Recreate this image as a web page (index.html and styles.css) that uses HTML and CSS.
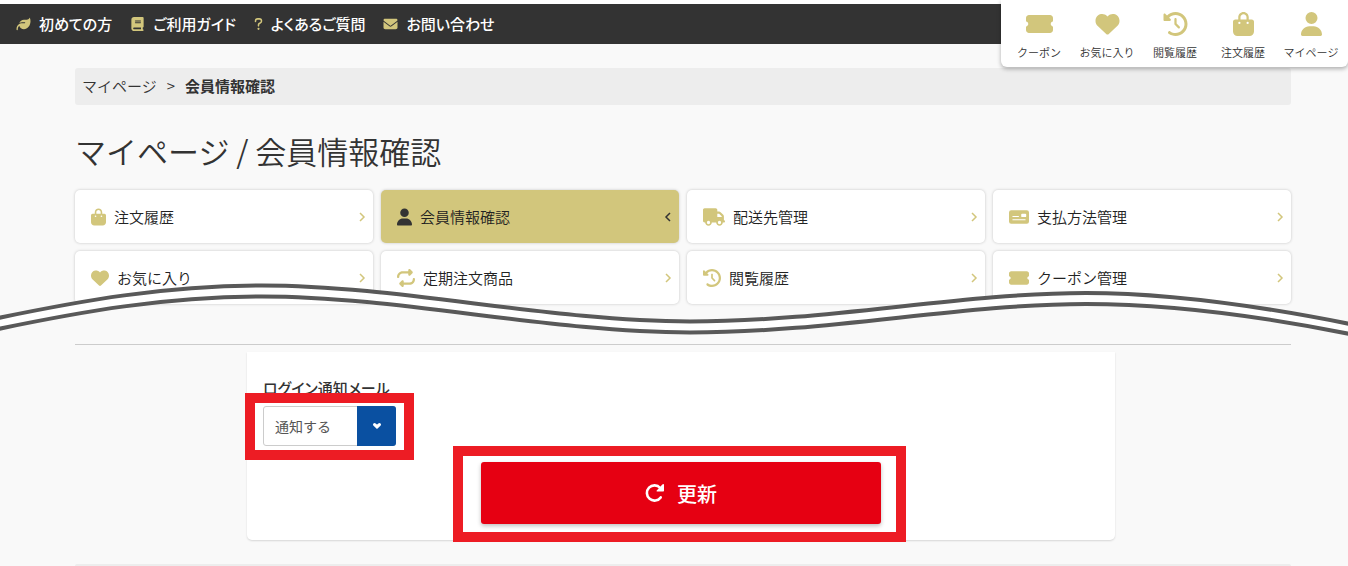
FILE: index.html
```html
<!DOCTYPE html>
<html lang="ja">
<head>
  <meta charset="UTF-8">
  <meta name="viewport" content="width=device-width, initial-scale=1.0">
  <title>マイページ / 会員情報確認</title>
  <link rel="stylesheet" href="styles.css">
</head>
<body>
  <!-- Icon set -->
  <svg class="icon-defs" aria-hidden="true">
    <symbol id="leaf" viewBox="0 0 512 512"><path d="M272 96c-78.6 0-145.1 51.5-167.7 122.5c33.6-17 71.5-26.5 111.7-26.5h88c8.8 0 16 7.2 16 16s-7.2 16-16 16H288 216c-16.6 0-32.7 1.9-48.3 5.4c-25.9 5.9-49.9 16.4-71.4 30.7C38.3 298.8 0 364.9 0 440v16c0 13.3 10.7 24 24 24s24-10.7 24-24V440c0-48.7 20.7-92.5 53.8-123.2C121.6 392.3 190.3 448 272 448l1 0c132.1-.7 239-130.9 239-291.4c0-42.6-7.5-83.1-21.1-119.6c-2.6-6.9-12.7-6.6-16.2-.1C455.9 72.1 418.7 96 376 96L272 96z"/></symbol>
    <symbol id="book" viewBox="0 0 448 512"><path d="M96 0C43 0 0 43 0 96V416c0 53 43 96 96 96H384h32c17.7 0 32-14.3 32-32s-14.3-32-32-32V384c17.7 0 32-14.3 32-32V32c0-17.7-14.3-32-32-32H384 96zm0 384H352v64H96c-17.7 0-32-14.3-32-32s14.3-32 32-32zm32-240c0-8.8 7.2-16 16-16H336c8.8 0 16 7.2 16 16s-7.2 16-16 16H144c-8.8 0-16-7.2-16-16zm16 48H336c8.8 0 16 7.2 16 16s-7.2 16-16 16H144c-8.8 0-16-7.2-16-16s7.2-16 16-16z"/></symbol>
    <symbol id="question" viewBox="0 0 320 512"><path d="M50 165v-15c0-46 34-82 80-82h60c46 0 80 36 80 80 0 30-16 54-42 68l-38 22c-18 10-30 26-30 46v40" fill="none" stroke="currentColor" stroke-width="56" stroke-linecap="round"/><circle cx="160" cy="432" r="40"/></symbol>
    <symbol id="envelope" viewBox="0 0 512 512"><path d="M48 64C21.5 64 0 85.5 0 112c0 15.1 7.1 29.3 19.2 38.4L236.8 313.6c11.4 8.5 27 8.5 38.4 0L492.8 150.4c12.1-9.1 19.2-23.3 19.2-38.4c0-26.5-21.5-48-48-48H48zM0 176V384c0 35.3 28.7 64 64 64H448c35.3 0 64-28.7 64-64V176L294.4 339.2c-22.8 17.1-54 17.1-76.8 0L0 176z"/></symbol>
    <symbol id="ticket" viewBox="0 0 576 512"><path d="M0 128C0 92.7 28.7 64 64 64H512c35.3 0 64 28.7 64 64v64c0 8.8-7.4 15.7-15.7 18.6C541.5 217.1 528 235 528 256s13.5 38.9 32.3 45.4c8.3 2.9 15.7 9.8 15.7 18.6v64c0 35.3-28.7 64-64 64H64c-35.3 0-64-28.7-64-64V320c0-8.8 7.4-15.7 15.7-18.6C34.5 294.9 48 277 48 256s-13.5-38.9-32.3-45.4C7.4 207.7 0 200.8 0 192V128z"/></symbol>
    <symbol id="heart" viewBox="0 0 512 512"><path d="M47.6 300.4L228.3 469.1c7.5 7 17.4 10.9 27.7 10.9s20.2-3.9 27.7-10.9L464.4 300.4c30.4-28.3 47.6-68 47.6-109.5v-5.8c0-69.9-50.5-129.5-119.4-141C347 36.5 300.6 51.4 268 84L256 96 244 84c-32.6-32.6-79-47.5-124.6-39.9C50.5 55.6 0 115.2 0 185.1v5.8c0 41.5 17.2 81.2 47.6 109.5z"/></symbol>
    <symbol id="history" viewBox="0 0 512 512"><path d="M75 75L41 41C25.9 25.9 0 36.6 0 57.9V168c0 13.3 10.7 24 24 24H134.1c21.4 0 32.1-25.9 17-41l-30.8-30.8C155 85.5 203 64 256 64c106 0 192 86 192 192s-86 192-192 192c-40.8 0-78.6-12.7-109.7-34.4c-14.5-10.1-34.4-6.6-44.6 7.9s-6.6 34.4 7.9 44.6C151.2 495 201.7 512 256 512c141.4 0 256-114.6 256-256S397.4 0 256 0C185.3 0 121.3 28.7 75 75zm181 53c-13.3 0-24 10.7-24 24V256c0 6.4 2.5 12.5 7 17l72 72c9.4 9.4 24.6 9.4 33.9 0s9.4-24.6 0-33.9l-65-65V152c0-13.3-10.7-24-24-24z"/></symbol>
    <symbol id="bag" viewBox="0 0 448 512"><path d="M160 112c0-35.3 28.7-64 64-64s64 28.7 64 64v48H160V112zm-48 48H48c-26.5 0-48 21.5-48 48V416c0 53 43 96 96 96H352c53 0 96-43 96-96V208c0-26.5-21.5-48-48-48H336V112C336 50.1 285.9 0 224 0S112 50.1 112 112v48zm24 48a24 24 0 1 1 0 48 24 24 0 1 1 0-48zm152 24a24 24 0 1 1 48 0 24 24 0 1 1-48 0z"/></symbol>
    <symbol id="user" viewBox="0 0 448 512"><path d="M224 256A128 128 0 1 0 224 0a128 128 0 1 0 0 256zm-45.7 48C79.8 304 0 383.8 0 482.3C0 498.7 13.3 512 29.7 512H418.3c16.4 0 29.7-13.3 29.7-29.7C448 383.8 368.2 304 269.7 304H178.3z"/></symbol>
    <symbol id="truck" viewBox="0 0 640 512"><path d="M48 0C21.5 0 0 21.5 0 48V368c0 26.5 21.5 48 48 48H64c0 53 43 96 96 96s96-43 96-96H384c0 53 43 96 96 96s96-43 96-96h32c17.7 0 32-14.3 32-32s-14.3-32-32-32V288 256 237.3c0-17-6.7-33.3-18.7-45.3L512 114.7c-12-12-28.3-18.7-45.3-18.7H416V48c0-26.5-21.5-48-48-48H48zM416 160h50.7L544 237.3V256H416V160zM112 416a48 48 0 1 1 96 0 48 48 0 1 1-96 0zm368-48a48 48 0 1 1 0 96 48 48 0 1 1 0-96z"/></symbol>
    <symbol id="check" viewBox="0 0 576 512"><path fill-rule="evenodd" d="M64 64H512a64 64 0 0 1 64 64V384a64 64 0 0 1-64 64H64a64 64 0 0 1-64-64V128a64 64 0 0 1 64-64zM112 224a16 16 0 0 0 0 32H272a16 16 0 0 0 0-32zM112 320a16 16 0 0 0 0 32H464a16 16 0 0 0 0-32zM376 160a24 24 0 0 0-24 24V232a24 24 0 0 0 24 24H472a24 24 0 0 0 24-24V184a24 24 0 0 0-24-24z"/></symbol>
    <symbol id="repeat" viewBox="0 0 512 512"><path d="M0 224c0 17.7 14.3 32 32 32s32-14.3 32-32c0-53 43-96 96-96H320v32c0 12.9 7.8 24.6 19.8 29.6s25.7 2.2 34.9-6.9l64-64c12.5-12.5 12.5-32.8 0-45.3l-64-64c-9.2-9.2-22.9-11.9-34.9-6.9S320 19.1 320 32V64H160C71.6 64 0 135.6 0 224zm512 64c0-17.7-14.3-32-32-32s-32 14.3-32 32c0 53-43 96-96 96H192V352c0-12.9-7.8-24.6-19.8-29.6s-25.7-2.2-34.9 6.9l-64 64c-12.5 12.5-12.5 32.8 0 45.3l64 64c9.2 9.2 22.9 11.9 34.9 6.9s19.8-16.6 19.8-29.6V448H352c88.4 0 160-71.6 160-160z"/></symbol>
    <symbol id="arrow" viewBox="0 0 8 12"><path d="M2 2l4 4-4 4" fill="none" stroke="currentColor" stroke-width="1.5"/></symbol>
    <symbol id="reload" viewBox="0 0 20 20"><path d="M15.7 14.4A7.6 7.6 0 1 1 15.2 5" fill="none" stroke="currentColor" stroke-width="2.6" stroke-linecap="round"/><path d="M19 1.6v6.2q0 .8-.8.8h-6q-1.200-.2-.5-1.200l5.900-6.100q1.200-.9 1.400.3z"/></symbol>
    <symbol id="caret" viewBox="0 0 10 8"><path d="M2.600 2.600L5 4.800l2.400-2.200" fill="none" stroke="currentColor" stroke-width="3.200" stroke-linecap="round"/></symbol>
  </svg>

  <header class="header">
    <nav class="guide-nav">
      <a href="#"><svg class="guide-icon"><use href="#leaf"/></svg>初めての方</a>
      <a href="#"><svg class="guide-icon"><use href="#book"/></svg>ご利用ガイド</a>
      <a href="#"><svg class="guide-icon narrow"><use href="#question"/></svg>よくあるご質問</a>
      <a href="#"><svg class="guide-icon"><use href="#envelope"/></svg>お問い合わせ</a>
    </nav>
    <nav class="quick-nav">
      <a href="#"><svg><use href="#ticket"/></svg>クーポン</a>
      <a href="#"><svg><use href="#heart"/></svg>お気に入り</a>
      <a href="#"><svg><use href="#history"/></svg>閲覧履歴</a>
      <a href="#"><svg><use href="#bag"/></svg>注文履歴</a>
      <a href="#"><svg><use href="#user"/></svg>マイページ</a>
    </nav>
  </header>

  <main>
    <div class="container">
      <div class="breadcrumb">
        <a href="#">マイページ</a>
        <span>&gt;</span>
        <strong>会員情報確認</strong>
      </div>

      <h1>マイページ / 会員情報確認</h1>

      <nav class="menu">
        <a href="#"><svg class="icon"><use href="#bag"/></svg>注文履歴<svg class="arrow"><use href="#arrow"/></svg></a>
        <a href="#" class="active"><svg class="icon"><use href="#user"/></svg>会員情報確認<svg class="arrow"><use href="#arrow"/></svg></a>
        <a href="#"><svg class="icon wide"><use href="#truck"/></svg>配送先管理<svg class="arrow"><use href="#arrow"/></svg></a>
        <a href="#"><svg class="icon card"><use href="#check"/></svg>支払方法管理<svg class="arrow"><use href="#arrow"/></svg></a>
        <a href="#"><svg class="icon medium"><use href="#heart"/></svg>お気に入り<svg class="arrow"><use href="#arrow"/></svg></a>
        <a href="#"><svg class="icon medium"><use href="#repeat"/></svg>定期注文商品<svg class="arrow"><use href="#arrow"/></svg></a>
        <a href="#"><svg class="icon medium"><use href="#history"/></svg>閲覧履歴<svg class="arrow"><use href="#arrow"/></svg></a>
        <a href="#"><svg class="icon card"><use href="#ticket"/></svg>クーポン管理<svg class="arrow"><use href="#arrow"/></svg></a>
      </nav>
    </div>

    <!-- Double wave over the lower edge of the menu -->
    <div class="wave">
      <svg viewBox="0 0 1348 56" preserveAspectRatio="none" aria-hidden="true">
        <path class="wave-fill" d="M0 36.5C80 20 165 4.500 262 4.500S550 40.500 690 40.500S960 12 1086 12C1170 12 1265 26 1348 42.500V53C1265 37 1170 23 1086 23C960 23 830 51.500 690 51.500S359 15.500 262 15.500S80 31 0 47.500z"/>
        <path class="wave-line" d="M-2 37C80 20 165 4.500 262 4.500C400 4.500 550 40.500 690 40.500C830 40.500 960 12 1086 12C1170 12 1265 26 1350 43"/>
        <path class="wave-line" d="M-2 48C80 31 165 15.500 262 15.500C400 15.500 550 51.500 690 51.500C830 51.500 960 23 1086 23C1170 23 1265 36 1350 53"/>
      </svg>
    </div>

    <div class="container">
      <hr>
      <form class="panel">
        <label for="loginMail">ログイン通知メール</label>
        <div class="select-box marked">
          <select id="loginMail">
            <option>通知する</option>
            <option>通知しない</option>
          </select>
          <span class="select-arrow"><svg><use href="#caret"/></svg></span>
        </div>
        <div class="submit-box marked">
          <button type="submit"><svg><use href="#reload"/></svg>更新</button>
        </div>
      </form>
      <div class="bottom-bar"></div>
    </div>
  </main>
</body>
</html>
```
FILE: styles.css
```css
* {
  box-sizing: border-box;
}

body {
  margin: 0;
  background-color: #f9f9f9;
  color: #333;
  font-family: "Noto Sans CJK JP", sans-serif;
  font-size: 15px;
  font-weight: 350;
  line-height: 24px;
}

a {
  color: inherit;
  text-decoration: none;
}

svg {
  fill: currentColor;
}

.icon-defs {
  display: none;
}

.header {
  position: relative;
  border-top: 4px solid #fff;
  background-color: #333;
}

.guide-nav {
  display: flex;
  align-items: center;
  gap: 18px;
  height: 40px;
  padding-left: 16px;
  color: #fff;
  font-weight: 500;
  font-feature-settings: "palt";
}

.guide-nav a {
  display: flex;
  align-items: center;
  gap: 8px;
}

.guide-icon {
  width: 15px;
  height: 14px;
  color: #d2c67c;
}

.guide-icon.narrow {
  width: 9px;
}

.quick-nav {
  position: absolute;
  top: -4px;
  right: 0;
  display: flex;
  height: 67px;
  padding: 12px 3px 0 4px;
  background-color: #fff;
  border-radius: 0 0 6px 6px;
  box-shadow: 0 2px 4px rgba(0, 0, 0, 0.3);
}

.quick-nav a {
  display: flex;
  flex-direction: column;
  align-items: center;
  gap: 8px;
  width: 68px;
  font-size: 11px;
  line-height: 16px;
}

.quick-nav svg {
  width: 27px;
  height: 24px;
  color: #d2c67c;
}

.container {
  padding: 0 57px 0 75px;
}

.breadcrumb {
  display: flex;
  align-items: center;
  gap: 10px;
  height: 37px;
  margin-top: 24px;
  padding: 0 7px 2px;
  background-color: #ededed;
  border-radius: 3px;
}

h1 {
  margin: 26px 0 19px;
  font-size: 31px;
  font-weight: 350;
  line-height: 40px;
}

.menu {
  display: grid;
  grid-template-columns: repeat(4, 1fr);
  gap: 8px;
}

.menu a {
  display: flex;
  align-items: center;
  gap: 8px;
  height: 53px;
  padding: 0 7px 0 16px;
  background-color: #fff;
  border-radius: 5px;
  box-shadow: 0 0 3px rgba(0, 0, 0, 0.22);
  color: #222;
}

.icon {
  width: 15px;
  height: 18px;
  color: #d2c67c;
}

.icon.medium {
  width: 18px;
}

.icon.card {
  width: 20px;
}

.icon.wide {
  width: 22px;
}

.arrow {
  width: 8px;
  height: 12px;
  margin-left: auto;
  color: #d2c67c;
}

.menu .active {
  background-color: #d2c67c;
}

.active .icon,
.active .arrow {
  color: #333;
}

.active .arrow {
  transform: rotate(180deg);
}

.wave {
  position: relative;
  height: 40px;
}

.wave svg {
  position: absolute;
  bottom: 7px;
  left: 0;
  width: 100%;
  height: 56px;
}

.wave-fill {
  fill: #fff;
}

.wave-line {
  fill: none;
  stroke: #595959;
  stroke-width: 4;
}

hr {
  margin: 0;
  border: 0;
  border-top: 1px solid #ccc;
}

.panel {
  margin: 7px 176px 0 172px;
  padding: 24px 16px 16px;
  background-color: #fff;
  border-radius: 0 0 5px 5px;
  box-shadow: 0 1px 2px rgba(0, 0, 0, 0.14);
}

.panel label {
  display: block;
  margin-bottom: 6px;
  font-weight: 500;
  font-feature-settings: "palt";
}

.marked {
  position: relative;
}

/* Red frame round the control */
.marked::after {
  content: "";
  position: absolute;
  border: 10px solid #ed1c24;
  pointer-events: none;
}

.select-box {
  width: 133px;
}

.select-box::after {
  inset: -13px -18px -14px;
}

.select-box select {
  display: block;
  width: 100%;
  height: 40px;
  padding: 0 40px 0 11px;
  appearance: none;
  background-color: #fff;
  border: 1px solid #ccc;
  border-radius: 3px;
  color: #555;
  font-family: inherit;
  font-size: 14px;
}

.select-arrow {
  position: absolute;
  top: 0;
  right: 0;
  display: flex;
  align-items: center;
  justify-content: center;
  width: 39px;
  height: 40px;
  background-color: #0a50a1;
  border-radius: 0 3px 3px 0;
  color: #fff;
  pointer-events: none;
}

.select-arrow svg {
  width: 10px;
  height: 8px;
}

.submit-box {
  max-width: 400px;
  margin: 16px auto 0;
}

.submit-box::after {
  inset: -16px -25px -18px -28px;
}

.submit-box button {
  display: flex;
  align-items: center;
  justify-content: center;
  gap: 12px;
  width: 100%;
  height: 62px;
  background-color: #e60012;
  border: 0;
  border-radius: 3px;
  box-shadow: 0 2px 4px rgba(0, 0, 0, 0.25);
  color: #fff;
  font-family: inherit;
  font-size: 20px;
  font-weight: 500;
  cursor: pointer;
}

.submit-box svg {
  width: 20px;
  height: 20px;
}

.bottom-bar {
  height: 2px;
  margin-top: 24px;
  background-color: #ededed;
  border-radius: 3px 3px 0 0;
}
```
